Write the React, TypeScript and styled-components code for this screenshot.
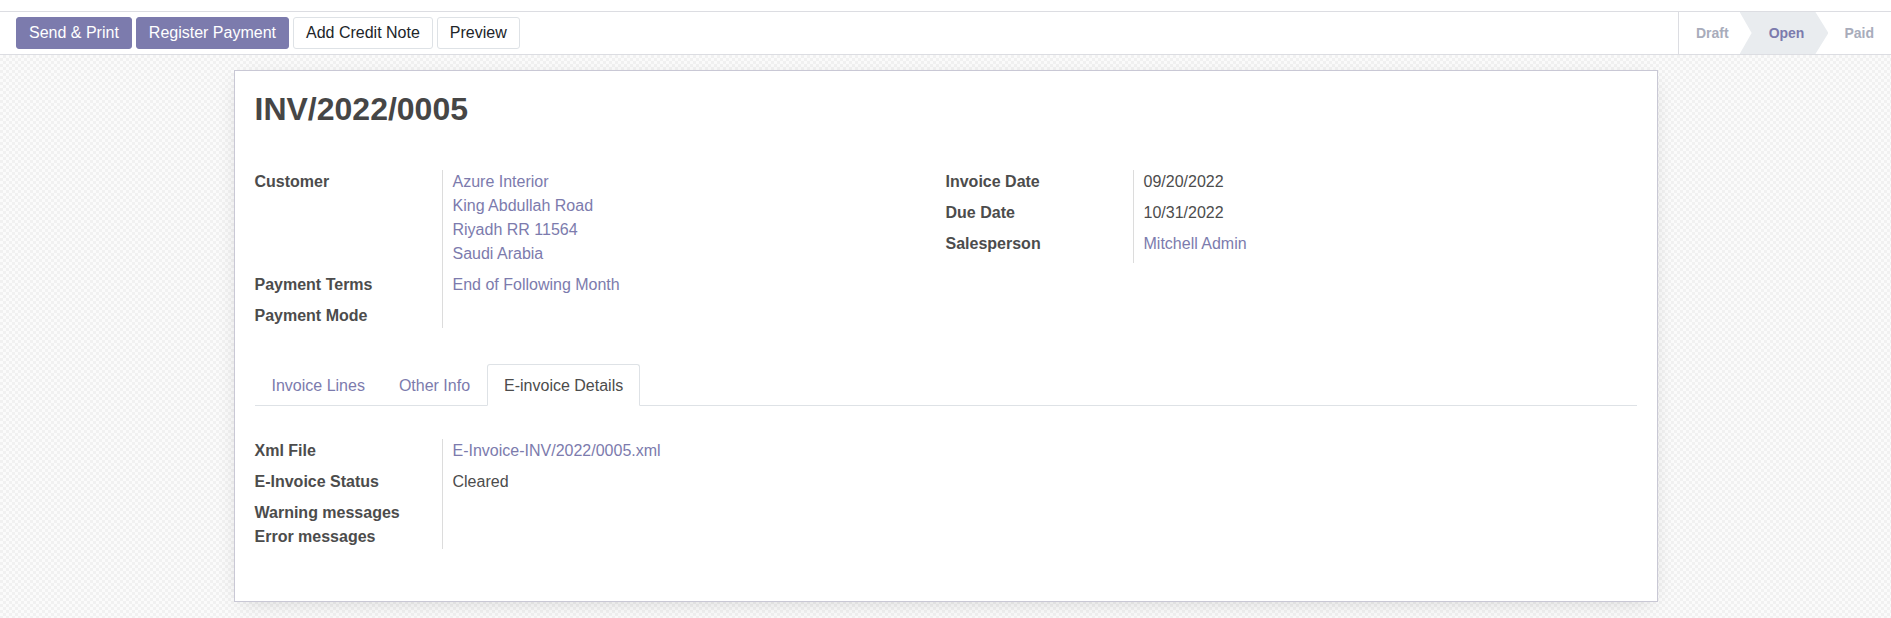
import React from 'react';
import styled, { createGlobalStyle } from 'styled-components';

const GlobalStyle = createGlobalStyle`
	html, body {
		margin: 0;
		padding: 0;
		background: #ffffff;
	}
	body {
		font-family: "Liberation Sans", Arial, sans-serif;
		font-size: 16px;
		color: #4c4c4c;
	}
`;

const Page = styled.div`
	width: 1891px;
	height: 618px;
	display: flex;
	flex-direction: column;
	overflow: hidden;
`;

const TopStrip = styled.div`
	height: 11px;
	background: #ffffff;
`;

const ControlPanel = styled.section`
	display: flex;
	justify-content: space-between;
	align-items: stretch;
	height: 42px;
	background: #ffffff;
	border-top: 1px solid #dcdde2;
	border-bottom: 1px solid #dcdde2;
`;

const ButtonBar = styled.div`
	display: flex;
	align-items: center;
	gap: 4px;
	padding: 0 0 0 16px;
`;

const Button = styled.button<{ $primary?: boolean }>`
	height: 32px;
	padding: 0 12px;
	font-family: inherit;
	font-size: 16px;
	border-radius: 3px;
	cursor: pointer;
	border: 1px solid ${(p) => (p.$primary ? '#7c7bad' : '#dee2e6')};
	background: ${(p) => (p.$primary ? '#7c7bad' : '#ffffff')};
	color: ${(p) => (p.$primary ? '#ffffff' : '#212529')};
`;

const StatusBar = styled.div`
	display: flex;
	align-items: stretch;
	border-left: 1px solid #dcdde2;
`;

const Stage = styled.div<{ $current?: boolean; $first?: boolean }>`
	display: flex;
	align-items: center;
	font-size: 14px;
	font-weight: bold;
	color: ${(p) => (p.$current ? '#7c7bad' : '#a8acbb')};
	background: ${(p) => (p.$current ? '#e9ecef' : 'transparent')};
	padding: ${(p) => (p.$current ? '0 24px 0 29px' : p.$first ? '0 11px 0 17px' : '0 17px 0 16px')};
	clip-path: ${(p) =>
		p.$current
			? 'polygon(0 0, calc(100% - 13px) 0, 100% 50%, calc(100% - 13px) 100%, 0 100%, 12px 50%)'
			: 'none'};
`;

const Content = styled.main`
	flex: 1;
	padding: 15px 0;
	background-color: #f7f7f7;
	background-image: repeating-conic-gradient(#f1f1f1 0 25%, #fbfbfb 0 50%);
	background-size: 6px 6px;
`;

const Sheet = styled.div`
	box-sizing: border-box;
	width: 1424px;
	margin: 0 auto;
	background: #ffffff;
	border: 1px solid #c9c8d5;
	box-shadow: 0 5px 22px -8px rgba(0, 0, 0, 0.18);
	padding: 19px 20px 52px;
`;

const Title = styled.h1`
	margin: 0;
	font-size: 32px;
	line-height: 1.2;
	font-weight: bold;
	color: #464646;
`;

const Groups = styled.div`
	display: grid;
	grid-template-columns: 1fr 1fr;
	margin-top: 42px;
	align-items: start;
`;

const Group = styled.div`
	display: grid;
	grid-template-columns: 188px 1fr;
	line-height: 24px;
`;

const Label = styled.div<{ $filled?: boolean }>`
	font-weight: bold;
	color: #4c4c4c;
	border-right: 1px solid #dcdcdc;
	padding-bottom: ${(p) => (p.$filled ? '7px' : '0')};
`;

const Value = styled.div<{ $filled?: boolean }>`
	padding-left: 10px;
	padding-bottom: ${(p) => (p.$filled ? '7px' : '0')};
`;

const Link = styled.a`
	display: block;
	color: #7c7bad;
	text-decoration: none;
`;

const Text = styled.span`
	color: #4c4c4c;
`;

const Notebook = styled.div`
	margin-top: 36px;
`;

const TabNav = styled.div`
	display: flex;
	border-bottom: 1px solid #dee2e6;
`;

const Tab = styled.div<{ $active?: boolean }>`
	padding: 9px 16px 7px;
	line-height: 24px;
	margin-bottom: -1px;
	border: 1px solid ${(p) => (p.$active ? '#dee2e6' : 'transparent')};
	border-bottom-color: ${(p) => (p.$active ? '#ffffff' : 'transparent')};
	border-radius: 3px 3px 0 0;
	background: ${(p) => (p.$active ? '#ffffff' : 'transparent')};
	color: ${(p) => (p.$active ? '#4c4c4c' : '#7c7bad')};
`;

const TabPane = styled.div`
	padding-top: 33px;
	width: 690px;
`;

const App = () => {
	return (
		<Page>
			<GlobalStyle />
			<TopStrip />
			<ControlPanel>
				<ButtonBar>
					<Button $primary>Send &amp; Print</Button>
					<Button $primary>Register Payment</Button>
					<Button>Add Credit Note</Button>
					<Button>Preview</Button>
				</ButtonBar>
				<StatusBar>
					<Stage $first>Draft</Stage>
					<Stage $current>Open</Stage>
					<Stage>Paid</Stage>
				</StatusBar>
			</ControlPanel>

			<Content>
				<Sheet>
					<Title>INV/2022/0005</Title>

					<Groups>
						<Group>
							<Label $filled>Customer</Label>
							<Value $filled>
								<Link>Azure Interior</Link>
								<Link>King Abdullah Road</Link>
								<Link>Riyadh RR 11564</Link>
								<Link>Saudi Arabia</Link>
							</Value>
							<Label $filled>Payment Terms</Label>
							<Value $filled><Link>End of Following Month</Link></Value>
							<Label>Payment Mode</Label>
							<Value />
						</Group>

						<Group>
							<Label $filled>Invoice Date</Label>
							<Value $filled><Text>09/20/2022</Text></Value>
							<Label $filled>Due Date</Label>
							<Value $filled><Text>10/31/2022</Text></Value>
							<Label $filled>Salesperson</Label>
							<Value $filled><Link>Mitchell Admin</Link></Value>
						</Group>
					</Groups>

					<Notebook>
						<TabNav>
							<Tab>Invoice Lines</Tab>
							<Tab>Other Info</Tab>
							<Tab $active>E-invoice Details</Tab>
						</TabNav>
						<TabPane>
							<Group>
								<Label $filled>Xml File</Label>
								<Value $filled><Link>E-Invoice-INV/2022/0005.xml</Link></Value>
								<Label $filled>E-Invoice Status</Label>
								<Value $filled><Text>Cleared</Text></Value>
								<Label>Warning messages</Label>
								<Value />
								<Label>Error messages</Label>
								<Value />
							</Group>
						</TabPane>
					</Notebook>
				</Sheet>
			</Content>
		</Page>
	);
};

export default App;
